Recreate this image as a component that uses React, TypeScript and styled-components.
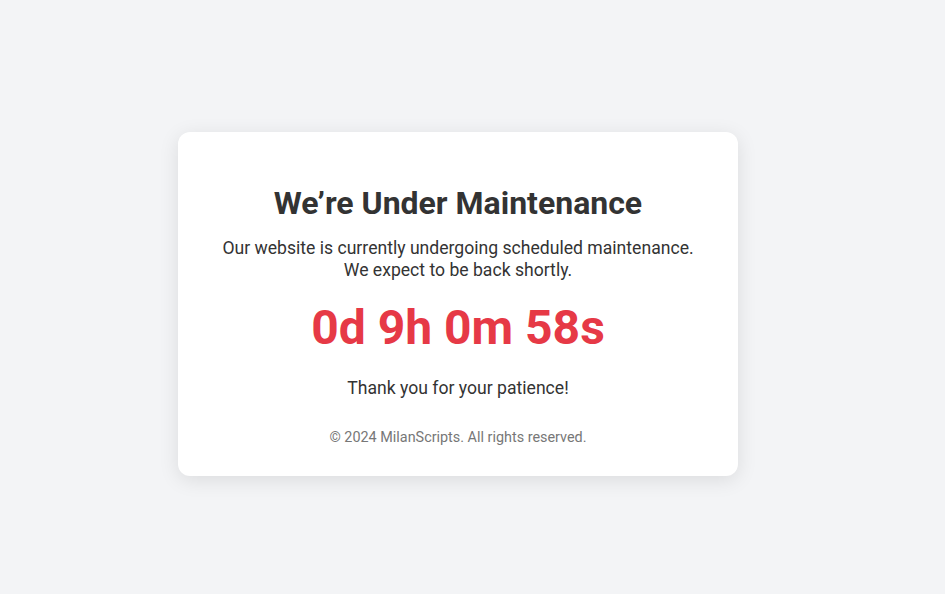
import styled, { createGlobalStyle } from "styled-components";

const GlobalStyle = createGlobalStyle`
  html, body {
    margin: 0;
    padding: 0;
    background: #f3f4f6;
    font-family: Roboto, "Liberation Sans", sans-serif;
  }
`;

export default function App() {
  return (
    <>
      <GlobalStyle />
      <Page>
        <Card>
          <Title>We’re Under Maintenance</Title>
          <Message>
            Our website is currently undergoing scheduled maintenance.
            <br />
            We expect to be back shortly.
          </Message>
          <Countdown>0d 9h 0m 58s</Countdown>
          <Thanks>Thank you for your patience!</Thanks>
          <Footer>© 2024 MilanScripts. All rights reserved.</Footer>
        </Card>
      </Page>
    </>
  );
}

const Page = styled.main`
  box-sizing: border-box;
  display: flex;
  align-items: center;
  justify-content: center;
  height: 594px;
  padding: 14px 29px 0 0;
`;

const Card = styled.div`
  box-sizing: border-box;
  width: 560px;
  height: 344px;
  padding: 40px 20px;
  background: #fff;
  border-radius: 12px;
  box-shadow: 0 4px 20px rgba(0, 0, 0, 0.1);
  text-align: center;
  color: #333;
`;

const Title = styled.h1`
  margin: 12px 0 15px;
  font-size: 32px;
  font-weight: 700;
`;

const Message = styled.p`
  margin: 0;
  font-size: 17.6px;
  line-height: 22px;
`;

const Countdown = styled.div`
  margin: 18px 0 22px;
  font-size: 48px;
  font-weight: 700;
  color: #e63946;
`;

const Thanks = styled.p`
  margin: 0;
  font-size: 17.6px;
  line-height: 21px;
`;

const Footer = styled.p`
  margin: 30px 0 0;
  font-size: 14.4px;
  color: #777;
`;
